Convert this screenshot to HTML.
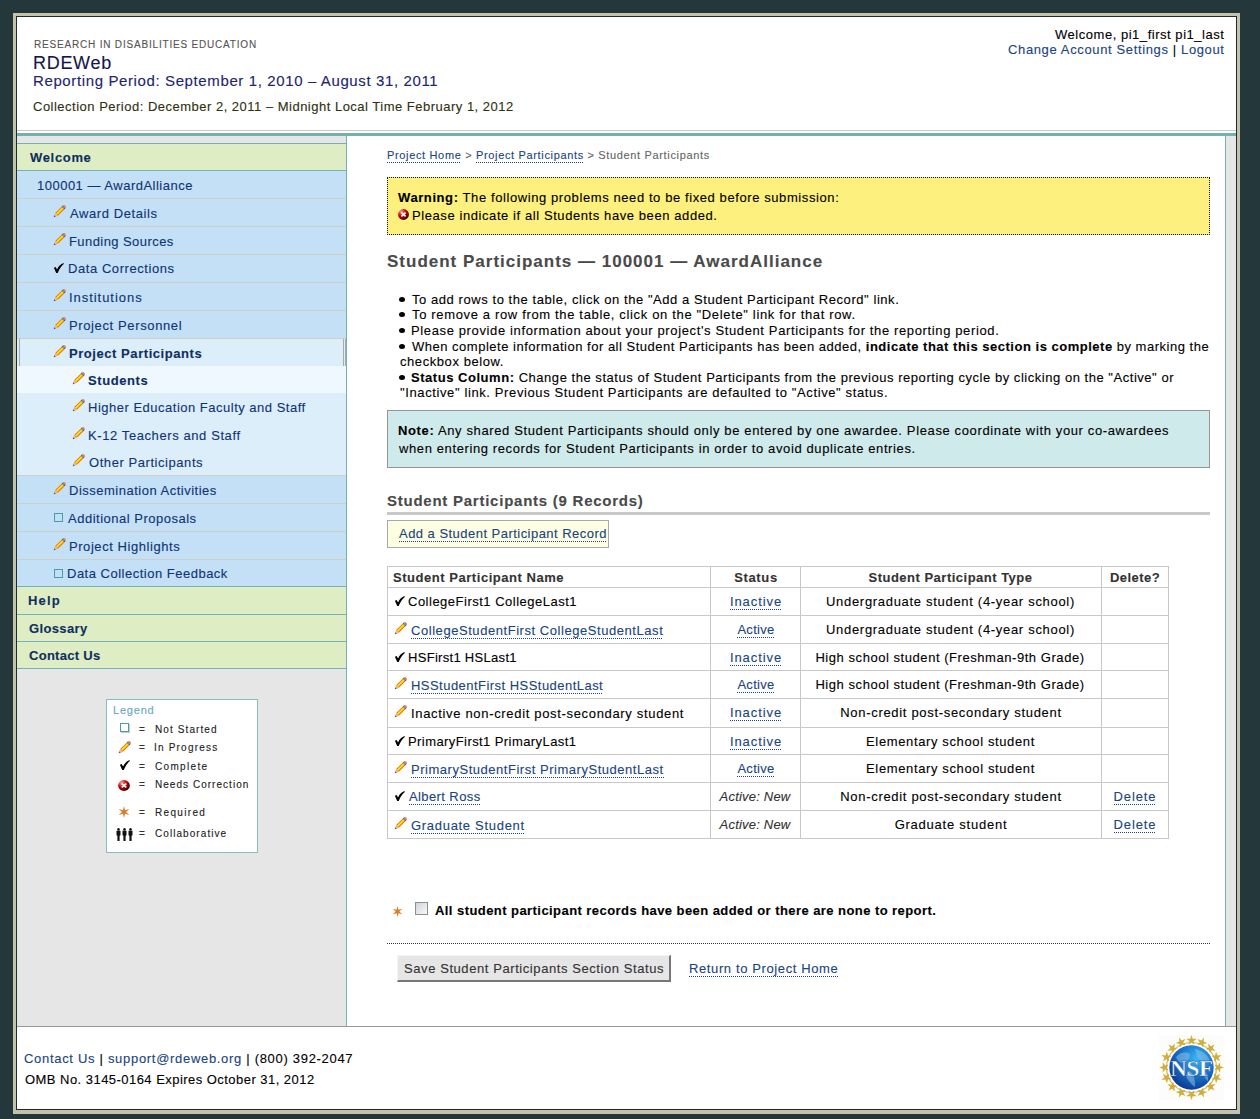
<!DOCTYPE html>
<html><head><meta charset="utf-8">
<style>
html,body{margin:0;padding:0;}
body{width:1260px;height:1119px;background:#24373b;position:relative;overflow:hidden;font-family:"Liberation Sans",sans-serif;font-size:13px;color:#000;}
.a{position:absolute;white-space:nowrap;-webkit-text-stroke:0.12px currentColor;}
svg.a{display:block;}
.u{background-image:linear-gradient(to right,currentColor 50%,transparent 50%);background-size:2px 1px;background-repeat:repeat-x;background-position:0 100%;padding-bottom:1px;}
.u11{padding-bottom:2px;}
b{font-weight:700;}
</style></head><body>
<div class="a" style="left:13px;top:13px;width:1227px;height:1101px;background:#c4c2ad;"></div>
<div class="a" style="left:16px;top:16px;width:1221px;height:1094px;background:#1e2b2e;"></div>
<div class="a" style="left:17px;top:17px;width:1219px;height:1092px;background:#ffffff;"></div>
<div id="t1" class="a" style="left:34px;top:40px;font-size:10px;line-height:10px;color:#555;letter-spacing:0.811px;">RESEARCH IN DISABILITIES EDUCATION</div>
<div id="t2" class="a" style="left:33px;top:54px;font-size:18px;line-height:18px;color:#14164a;letter-spacing:0.700px;">RDEWeb</div>
<div id="t3" class="a" style="left:33px;top:73px;font-size:15px;line-height:15px;color:#1d2470;letter-spacing:0.618px;">Reporting Period: September 1, 2010 – August 31, 2011</div>
<div id="t4" class="a" style="left:33px;top:100px;font-size:13px;line-height:13px;color:#2e3210;letter-spacing:0.494px;">Collection Period: December 2, 2011 – Midnight Local Time February 1, 2012</div>
<div id="t5" class="a" style="left:1055px;top:28px;font-size:13px;line-height:13px;color:#000;letter-spacing:0.530px;">Welcome, pi1_first pi1_last</div>
<div id="t6" class="a" style="left:1008px;top:43px;font-size:13px;line-height:13px;color:#000;letter-spacing:0.632px;"><span style="color:#1a4580">Change Account Settings</span> | <span style="color:#1a4580">Logout</span></div>
<div class="a" style="left:17px;top:130px;width:1219px;height:1px;background:#c8c8c8;"></div>
<div class="a" style="left:17px;top:133px;width:1219px;height:3px;background:#74b1b2;"></div>
<div class="a" style="left:17px;top:136px;width:329px;height:890px;background:#e6e6e6;"></div>
<div class="a" style="left:346px;top:136px;width:1px;height:890px;background:#74b1b2;"></div>
<div class="a" style="left:17px;top:143px;width:329px;height:1px;background:#74b1b2;"></div>
<div class="a" style="left:17px;top:144px;width:329px;height:26px;background:#dfedc4;"></div>
<div class="a" style="left:17px;top:170px;width:329px;height:1px;background:#74b1b2;"></div>
<div id="t7" class="a" style="left:30px;top:151px;font-size:13px;line-height:13px;color:#0f2f5f;font-weight:700;letter-spacing:0.667px;">Welcome</div>
<div class="a" style="left:17px;top:171px;width:329px;height:415px;background:#c3e0f6;"></div>
<div class="a" style="left:17px;top:586px;width:329px;height:1px;background:#74b1b2;"></div>
<div id="t8" class="a" style="left:37px;top:179px;font-size:13px;line-height:13px;color:#0f3474;letter-spacing:0.495px;">100001 — AwardAlliance</div>
<div class="a" style="left:17px;top:198px;width:329px;height:1px;background:#cfcfc8;"></div>
<div class="a" style="left:17px;top:226px;width:329px;height:1px;background:#cfcfc8;"></div>
<div class="a" style="left:17px;top:254px;width:329px;height:1px;background:#cfcfc8;"></div>
<div class="a" style="left:17px;top:282px;width:329px;height:1px;background:#cfcfc8;"></div>
<div class="a" style="left:17px;top:310px;width:329px;height:1px;background:#cfcfc8;"></div>
<div class="a" style="left:17px;top:338px;width:329px;height:1px;background:#cfcfc8;"></div>
<svg class="a" style="left:53px;top:205px" width="13" height="13" viewBox="0 0 13 13"><g transform="translate(6.5 6.5) rotate(-45) scale(0.88) translate(-9.3 -2.1)"><polygon points="0,2.1 2.3,0.8 2.3,3.4" fill="#5e5656"/><polygon points="2.3,0.8 4.6,0 4.6,4.2 2.3,3.4" fill="#e6b49c"/><rect x="4.6" y="0" width="10.6" height="4.2" fill="#e07800"/><rect x="4.6" y="0.9" width="10.6" height="2.3" fill="#ffc200"/><rect x="5.2" y="1.3" width="9.4" height="1.0" fill="#ffe84a"/><rect x="15.2" y="0" width="1.5" height="4.2" fill="#276488"/><rect x="15.5" y="1" width="0.7" height="2" fill="#70b4dc"/><path d="M16.7 0 H17.4 Q18.6 0 18.6 2.1 Q18.6 4.2 17.4 4.2 H16.7 Z" fill="#f0805a"/></g></svg>
<div id="t9" class="a" style="left:70px;top:207px;font-size:13px;line-height:13px;color:#0f3474;letter-spacing:0.583px;">Award Details</div>
<svg class="a" style="left:53px;top:233px" width="13" height="13" viewBox="0 0 13 13"><g transform="translate(6.5 6.5) rotate(-45) scale(0.88) translate(-9.3 -2.1)"><polygon points="0,2.1 2.3,0.8 2.3,3.4" fill="#5e5656"/><polygon points="2.3,0.8 4.6,0 4.6,4.2 2.3,3.4" fill="#e6b49c"/><rect x="4.6" y="0" width="10.6" height="4.2" fill="#e07800"/><rect x="4.6" y="0.9" width="10.6" height="2.3" fill="#ffc200"/><rect x="5.2" y="1.3" width="9.4" height="1.0" fill="#ffe84a"/><rect x="15.2" y="0" width="1.5" height="4.2" fill="#276488"/><rect x="15.5" y="1" width="0.7" height="2" fill="#70b4dc"/><path d="M16.7 0 H17.4 Q18.6 0 18.6 2.1 Q18.6 4.2 17.4 4.2 H16.7 Z" fill="#f0805a"/></g></svg>
<div id="t10" class="a" style="left:69px;top:235px;font-size:13px;line-height:13px;color:#0f3474;letter-spacing:0.429px;">Funding Sources</div>
<svg class="a" style="left:53px;top:263px" width="11" height="10" viewBox="0 0 11 10"><path d="M0.9 4.7 L2.7 3.9 L4.0 6.4 Q6.4 1.6 10.6 0.1 L10.8 1.1 Q7.5 3.5 4.7 9.9 L3.2 10 Z" fill="#000"/></svg>
<div id="t11" class="a" style="left:68px;top:262px;font-size:13px;line-height:13px;color:#0f3474;letter-spacing:0.567px;">Data Corrections</div>
<svg class="a" style="left:53px;top:289px" width="13" height="13" viewBox="0 0 13 13"><g transform="translate(6.5 6.5) rotate(-45) scale(0.88) translate(-9.3 -2.1)"><polygon points="0,2.1 2.3,0.8 2.3,3.4" fill="#5e5656"/><polygon points="2.3,0.8 4.6,0 4.6,4.2 2.3,3.4" fill="#e6b49c"/><rect x="4.6" y="0" width="10.6" height="4.2" fill="#e07800"/><rect x="4.6" y="0.9" width="10.6" height="2.3" fill="#ffc200"/><rect x="5.2" y="1.3" width="9.4" height="1.0" fill="#ffe84a"/><rect x="15.2" y="0" width="1.5" height="4.2" fill="#276488"/><rect x="15.5" y="1" width="0.7" height="2" fill="#70b4dc"/><path d="M16.7 0 H17.4 Q18.6 0 18.6 2.1 Q18.6 4.2 17.4 4.2 H16.7 Z" fill="#f0805a"/></g></svg>
<div id="t12" class="a" style="left:69px;top:291px;font-size:13px;line-height:13px;color:#0f3474;letter-spacing:0.955px;">Institutions</div>
<svg class="a" style="left:53px;top:317px" width="13" height="13" viewBox="0 0 13 13"><g transform="translate(6.5 6.5) rotate(-45) scale(0.88) translate(-9.3 -2.1)"><polygon points="0,2.1 2.3,0.8 2.3,3.4" fill="#5e5656"/><polygon points="2.3,0.8 4.6,0 4.6,4.2 2.3,3.4" fill="#e6b49c"/><rect x="4.6" y="0" width="10.6" height="4.2" fill="#e07800"/><rect x="4.6" y="0.9" width="10.6" height="2.3" fill="#ffc200"/><rect x="5.2" y="1.3" width="9.4" height="1.0" fill="#ffe84a"/><rect x="15.2" y="0" width="1.5" height="4.2" fill="#276488"/><rect x="15.5" y="1" width="0.7" height="2" fill="#70b4dc"/><path d="M16.7 0 H17.4 Q18.6 0 18.6 2.1 Q18.6 4.2 17.4 4.2 H16.7 Z" fill="#f0805a"/></g></svg>
<div id="t13" class="a" style="left:69px;top:319px;font-size:13px;line-height:13px;color:#0f3474;letter-spacing:0.625px;">Project Personnel</div>
<div class="a" style="left:17px;top:339px;width:329px;height:136px;background:#ddeefb;"></div>
<div class="a" style="left:19px;top:339px;width:1px;height:27px;background:#aaaaaa;"></div>
<div class="a" style="left:343px;top:339px;width:1px;height:27px;background:#aaaaaa;"></div>
<div class="a" style="left:345px;top:339px;width:1px;height:27px;background:#aaaaaa;"></div>
<svg class="a" style="left:53px;top:345px" width="13" height="13" viewBox="0 0 13 13"><g transform="translate(6.5 6.5) rotate(-45) scale(0.88) translate(-9.3 -2.1)"><polygon points="0,2.1 2.3,0.8 2.3,3.4" fill="#5e5656"/><polygon points="2.3,0.8 4.6,0 4.6,4.2 2.3,3.4" fill="#e6b49c"/><rect x="4.6" y="0" width="10.6" height="4.2" fill="#e07800"/><rect x="4.6" y="0.9" width="10.6" height="2.3" fill="#ffc200"/><rect x="5.2" y="1.3" width="9.4" height="1.0" fill="#ffe84a"/><rect x="15.2" y="0" width="1.5" height="4.2" fill="#276488"/><rect x="15.5" y="1" width="0.7" height="2" fill="#70b4dc"/><path d="M16.7 0 H17.4 Q18.6 0 18.6 2.1 Q18.6 4.2 17.4 4.2 H16.7 Z" fill="#f0805a"/></g></svg>
<div id="t14" class="a" style="left:69px;top:347px;font-size:13px;line-height:13px;color:#0f2f5f;font-weight:700;letter-spacing:0.555px;">Project Participants</div>
<div class="a" style="left:17px;top:366px;width:329px;height:27px;background:#eef8fe;"></div>
<svg class="a" style="left:72px;top:372px" width="13" height="13" viewBox="0 0 13 13"><g transform="translate(6.5 6.5) rotate(-45) scale(0.88) translate(-9.3 -2.1)"><polygon points="0,2.1 2.3,0.8 2.3,3.4" fill="#5e5656"/><polygon points="2.3,0.8 4.6,0 4.6,4.2 2.3,3.4" fill="#e6b49c"/><rect x="4.6" y="0" width="10.6" height="4.2" fill="#e07800"/><rect x="4.6" y="0.9" width="10.6" height="2.3" fill="#ffc200"/><rect x="5.2" y="1.3" width="9.4" height="1.0" fill="#ffe84a"/><rect x="15.2" y="0" width="1.5" height="4.2" fill="#276488"/><rect x="15.5" y="1" width="0.7" height="2" fill="#70b4dc"/><path d="M16.7 0 H17.4 Q18.6 0 18.6 2.1 Q18.6 4.2 17.4 4.2 H16.7 Z" fill="#f0805a"/></g></svg>
<div id="t15" class="a" style="left:88px;top:374px;font-size:13px;line-height:13px;color:#0f2f5f;font-weight:700;letter-spacing:0.593px;">Students</div>
<svg class="a" style="left:72px;top:399px" width="13" height="13" viewBox="0 0 13 13"><g transform="translate(6.5 6.5) rotate(-45) scale(0.88) translate(-9.3 -2.1)"><polygon points="0,2.1 2.3,0.8 2.3,3.4" fill="#5e5656"/><polygon points="2.3,0.8 4.6,0 4.6,4.2 2.3,3.4" fill="#e6b49c"/><rect x="4.6" y="0" width="10.6" height="4.2" fill="#e07800"/><rect x="4.6" y="0.9" width="10.6" height="2.3" fill="#ffc200"/><rect x="5.2" y="1.3" width="9.4" height="1.0" fill="#ffe84a"/><rect x="15.2" y="0" width="1.5" height="4.2" fill="#276488"/><rect x="15.5" y="1" width="0.7" height="2" fill="#70b4dc"/><path d="M16.7 0 H17.4 Q18.6 0 18.6 2.1 Q18.6 4.2 17.4 4.2 H16.7 Z" fill="#f0805a"/></g></svg>
<div id="t16" class="a" style="left:88px;top:401px;font-size:13px;line-height:13px;color:#0f3474;letter-spacing:0.500px;">Higher Education Faculty and Staff</div>
<svg class="a" style="left:72px;top:427px" width="13" height="13" viewBox="0 0 13 13"><g transform="translate(6.5 6.5) rotate(-45) scale(0.88) translate(-9.3 -2.1)"><polygon points="0,2.1 2.3,0.8 2.3,3.4" fill="#5e5656"/><polygon points="2.3,0.8 4.6,0 4.6,4.2 2.3,3.4" fill="#e6b49c"/><rect x="4.6" y="0" width="10.6" height="4.2" fill="#e07800"/><rect x="4.6" y="0.9" width="10.6" height="2.3" fill="#ffc200"/><rect x="5.2" y="1.3" width="9.4" height="1.0" fill="#ffe84a"/><rect x="15.2" y="0" width="1.5" height="4.2" fill="#276488"/><rect x="15.5" y="1" width="0.7" height="2" fill="#70b4dc"/><path d="M16.7 0 H17.4 Q18.6 0 18.6 2.1 Q18.6 4.2 17.4 4.2 H16.7 Z" fill="#f0805a"/></g></svg>
<div id="t17" class="a" style="left:88px;top:429px;font-size:13px;line-height:13px;color:#0f3474;letter-spacing:0.591px;">K-12 Teachers and Staff</div>
<svg class="a" style="left:72px;top:454px" width="13" height="13" viewBox="0 0 13 13"><g transform="translate(6.5 6.5) rotate(-45) scale(0.88) translate(-9.3 -2.1)"><polygon points="0,2.1 2.3,0.8 2.3,3.4" fill="#5e5656"/><polygon points="2.3,0.8 4.6,0 4.6,4.2 2.3,3.4" fill="#e6b49c"/><rect x="4.6" y="0" width="10.6" height="4.2" fill="#e07800"/><rect x="4.6" y="0.9" width="10.6" height="2.3" fill="#ffc200"/><rect x="5.2" y="1.3" width="9.4" height="1.0" fill="#ffe84a"/><rect x="15.2" y="0" width="1.5" height="4.2" fill="#276488"/><rect x="15.5" y="1" width="0.7" height="2" fill="#70b4dc"/><path d="M16.7 0 H17.4 Q18.6 0 18.6 2.1 Q18.6 4.2 17.4 4.2 H16.7 Z" fill="#f0805a"/></g></svg>
<div id="t18" class="a" style="left:89px;top:456px;font-size:13px;line-height:13px;color:#0f3474;letter-spacing:0.559px;">Other Participants</div>
<div class="a" style="left:17px;top:475px;width:329px;height:1px;background:#cfcfc8;"></div>
<div class="a" style="left:17px;top:503px;width:329px;height:1px;background:#cfcfc8;"></div>
<div class="a" style="left:17px;top:531px;width:329px;height:1px;background:#cfcfc8;"></div>
<div class="a" style="left:17px;top:559px;width:329px;height:1px;background:#cfcfc8;"></div>
<svg class="a" style="left:53px;top:482px" width="13" height="13" viewBox="0 0 13 13"><g transform="translate(6.5 6.5) rotate(-45) scale(0.88) translate(-9.3 -2.1)"><polygon points="0,2.1 2.3,0.8 2.3,3.4" fill="#5e5656"/><polygon points="2.3,0.8 4.6,0 4.6,4.2 2.3,3.4" fill="#e6b49c"/><rect x="4.6" y="0" width="10.6" height="4.2" fill="#e07800"/><rect x="4.6" y="0.9" width="10.6" height="2.3" fill="#ffc200"/><rect x="5.2" y="1.3" width="9.4" height="1.0" fill="#ffe84a"/><rect x="15.2" y="0" width="1.5" height="4.2" fill="#276488"/><rect x="15.5" y="1" width="0.7" height="2" fill="#70b4dc"/><path d="M16.7 0 H17.4 Q18.6 0 18.6 2.1 Q18.6 4.2 17.4 4.2 H16.7 Z" fill="#f0805a"/></g></svg>
<div id="t19" class="a" style="left:69px;top:484px;font-size:13px;line-height:13px;color:#0f3474;letter-spacing:0.500px;">Dissemination Activities</div>
<div class="a" style="left:54px;top:513px;width:7px;height:7px;background:transparent;border:1px solid #4a9aa8;"></div>
<div id="t20" class="a" style="left:68px;top:512px;font-size:13px;line-height:13px;color:#0f3474;letter-spacing:0.500px;">Additional Proposals</div>
<svg class="a" style="left:53px;top:538px" width="13" height="13" viewBox="0 0 13 13"><g transform="translate(6.5 6.5) rotate(-45) scale(0.88) translate(-9.3 -2.1)"><polygon points="0,2.1 2.3,0.8 2.3,3.4" fill="#5e5656"/><polygon points="2.3,0.8 4.6,0 4.6,4.2 2.3,3.4" fill="#e6b49c"/><rect x="4.6" y="0" width="10.6" height="4.2" fill="#e07800"/><rect x="4.6" y="0.9" width="10.6" height="2.3" fill="#ffc200"/><rect x="5.2" y="1.3" width="9.4" height="1.0" fill="#ffe84a"/><rect x="15.2" y="0" width="1.5" height="4.2" fill="#276488"/><rect x="15.5" y="1" width="0.7" height="2" fill="#70b4dc"/><path d="M16.7 0 H17.4 Q18.6 0 18.6 2.1 Q18.6 4.2 17.4 4.2 H16.7 Z" fill="#f0805a"/></g></svg>
<div id="t21" class="a" style="left:69px;top:540px;font-size:13px;line-height:13px;color:#0f3474;letter-spacing:0.559px;">Project Highlights</div>
<div class="a" style="left:54px;top:569px;width:7px;height:7px;background:transparent;border:1px solid #4a9aa8;"></div>
<div id="t22" class="a" style="left:67px;top:567px;font-size:13px;line-height:13px;color:#0f3474;letter-spacing:0.500px;">Data Collection Feedback</div>
<div class="a" style="left:17px;top:587px;width:329px;height:27px;background:#dfedc4;"></div>
<div class="a" style="left:17px;top:614px;width:329px;height:1px;background:#74b1b2;"></div>
<div id="t23" class="a" style="left:28px;top:594px;font-size:13px;line-height:13px;color:#0f2f5f;font-weight:700;letter-spacing:1.167px;">Help</div>
<div class="a" style="left:17px;top:615px;width:329px;height:26px;background:#dfedc4;"></div>
<div class="a" style="left:17px;top:641px;width:329px;height:1px;background:#74b1b2;"></div>
<div id="t24" class="a" style="left:29px;top:622px;font-size:13px;line-height:13px;color:#0f2f5f;font-weight:700;letter-spacing:0.357px;">Glossary</div>
<div class="a" style="left:17px;top:642px;width:329px;height:26px;background:#dfedc4;"></div>
<div class="a" style="left:17px;top:668px;width:329px;height:1px;background:#74b1b2;"></div>
<div id="t25" class="a" style="left:29px;top:649px;font-size:13px;line-height:13px;color:#0f2f5f;font-weight:700;letter-spacing:0.278px;">Contact Us</div>
<div class="a" style="left:106px;top:699px;width:150px;height:152px;background:#ffffff;border:1px solid #86bcc4;"></div>
<div id="t26" class="a" style="left:113px;top:705px;font-size:11px;line-height:11px;color:#6aa6c0;letter-spacing:0.800px;">Legend</div>
<div class="a" style="left:120px;top:723px;width:7px;height:7px;background:transparent;border:1px solid #4a9aa8;box-shadow:1px 1px 1px #ccc;"></div>
<div id="t27" class="a" style="left:139px;top:725px;font-size:10px;line-height:10px;color:#333;">=</div>
<div id="t28" class="a" style="left:155px;top:725px;font-size:10px;line-height:10px;color:#222;letter-spacing:1.100px;">Not Started</div>
<div id="t29" class="a" style="left:139px;top:743px;font-size:10px;line-height:10px;color:#333;">=</div>
<div id="t30" class="a" style="left:154px;top:743px;font-size:10px;line-height:10px;color:#222;letter-spacing:1.200px;">In Progress</div>
<div id="t31" class="a" style="left:139px;top:762px;font-size:10px;line-height:10px;color:#333;">=</div>
<div id="t32" class="a" style="left:155px;top:762px;font-size:10px;line-height:10px;color:#222;letter-spacing:1.329px;">Complete</div>
<div id="t33" class="a" style="left:139px;top:780px;font-size:10px;line-height:10px;color:#333;">=</div>
<div id="t34" class="a" style="left:155px;top:780px;font-size:10px;line-height:10px;color:#222;letter-spacing:1.033px;">Needs Correction</div>
<div id="t35" class="a" style="left:139px;top:808px;font-size:10px;line-height:10px;color:#333;">=</div>
<div id="t36" class="a" style="left:155px;top:808px;font-size:10px;line-height:10px;color:#222;letter-spacing:1.329px;">Required</div>
<div id="t37" class="a" style="left:139px;top:829px;font-size:10px;line-height:10px;color:#333;">=</div>
<div id="t38" class="a" style="left:155px;top:829px;font-size:10px;line-height:10px;color:#222;letter-spacing:1.066px;">Collaborative</div>
<svg class="a" style="left:118px;top:741px" width="13" height="13" viewBox="0 0 13 13"><g transform="translate(6.5 6.5) rotate(-45) scale(0.88) translate(-9.3 -2.1)"><polygon points="0,2.1 2.3,0.8 2.3,3.4" fill="#5e5656"/><polygon points="2.3,0.8 4.6,0 4.6,4.2 2.3,3.4" fill="#e6b49c"/><rect x="4.6" y="0" width="10.6" height="4.2" fill="#e07800"/><rect x="4.6" y="0.9" width="10.6" height="2.3" fill="#ffc200"/><rect x="5.2" y="1.3" width="9.4" height="1.0" fill="#ffe84a"/><rect x="15.2" y="0" width="1.5" height="4.2" fill="#276488"/><rect x="15.5" y="1" width="0.7" height="2" fill="#70b4dc"/><path d="M16.7 0 H17.4 Q18.6 0 18.6 2.1 Q18.6 4.2 17.4 4.2 H16.7 Z" fill="#f0805a"/></g></svg>
<svg class="a" style="left:119px;top:760px" width="11" height="10" viewBox="0 0 11 10"><path d="M0.9 4.7 L2.7 3.9 L4.0 6.4 Q6.4 1.6 10.6 0.1 L10.8 1.1 Q7.5 3.5 4.7 9.9 L3.2 10 Z" fill="#000"/></svg>
<svg class="a" style="left:118px;top:780px" width="12" height="11" viewBox="0 0 11 11" preserveAspectRatio="none"><defs><radialGradient id="rg" cx="0.3" cy="0.25" r="0.8"><stop offset="0" stop-color="#f4a6a6"/><stop offset="0.45" stop-color="#d10a0a"/><stop offset="1" stop-color="#3c0000"/></radialGradient></defs><circle cx="5.5" cy="5.5" r="5.4" fill="url(#rg)"/><path d="M3.4 3.6 L7.6 7.4 M7.6 3.6 L3.4 7.4" stroke="#fff" stroke-width="1.5"/></svg>
<svg class="a" style="left:118px;top:806px" width="12" height="12" viewBox="0 0 11 11"><polygon points="5.50,0.00 6.45,3.85 10.26,2.75 7.40,5.50 10.26,8.25 6.45,7.15 5.50,11.00 4.55,7.15 0.74,8.25 3.60,5.50 0.74,2.75 4.55,3.85" fill="#e07a24"/></svg>
<svg class="a" style="left:116px;top:828px" width="17" height="13" viewBox="0 0 17 13"><g fill="#111"><circle cx="2.5" cy="1.2" r="1.2"/><rect x="0.5" y="2.6" width="4" height="5.2" rx="1"/><rect x="1.4" y="7" width="2.2" height="6" rx="0.6"/><circle cx="8.5" cy="1.2" r="1.2"/><rect x="6.5" y="2.6" width="4" height="5.2" rx="1"/><rect x="7.4" y="7" width="2.2" height="6" rx="0.6"/><circle cx="14.5" cy="1.2" r="1.2"/><rect x="12.5" y="2.6" width="4" height="5.2" rx="1"/><rect x="13.4" y="7" width="2.2" height="6" rx="0.6"/></g></svg>
<div class="a" style="left:1225px;top:136px;width:1px;height:890px;background:#74b1b2;"></div>
<div class="a" style="left:1226px;top:136px;width:10px;height:890px;background:#e6e6e6;"></div>
<div id="t39" class="a" style="left:387px;top:150px;font-size:11px;line-height:11px;color:#666;letter-spacing:0.653px;"><span class="u u11" style="color:#1a4580">Project Home</span> &gt; <span class="u u11" style="color:#1a4580">Project Participants</span> &gt; Student Participants</div>
<div class="a" style="left:387px;top:177px;width:821px;height:56px;background:#fef07e;border:1px dotted #111;"></div>
<div id="t40" class="a" style="left:398px;top:191px;font-size:13px;line-height:13px;color:#000;letter-spacing:0.591px;"><b>Warning:</b> The following problems need to be fixed before submission:</div>
<svg class="a" style="left:398px;top:209px" width="11" height="11" viewBox="0 0 11 11" preserveAspectRatio="none"><defs><radialGradient id="rg" cx="0.3" cy="0.25" r="0.8"><stop offset="0" stop-color="#f4a6a6"/><stop offset="0.45" stop-color="#d10a0a"/><stop offset="1" stop-color="#3c0000"/></radialGradient></defs><circle cx="5.5" cy="5.5" r="5.4" fill="url(#rg)"/><path d="M3.4 3.6 L7.6 7.4 M7.6 3.6 L3.4 7.4" stroke="#fff" stroke-width="1.5"/></svg>
<div id="t41" class="a" style="left:412px;top:209px;font-size:13px;line-height:13px;color:#000;letter-spacing:0.583px;">Please indicate if all Students have been added.</div>
<div id="t42" class="a" style="left:387px;top:253px;font-size:17px;line-height:17px;color:#4a4a4a;font-weight:700;letter-spacing:1.000px;">Student Participants — 100001 — AwardAlliance</div>
<div class="a" style="left:399px;top:297px;width:6px;height:5px;background:#000;border-radius:50%;"></div>
<div id="t43" class="a" style="left:412px;top:293px;font-size:13px;line-height:13px;color:#000;letter-spacing:0.564px;">To add rows to the table, click on the "Add a Student Participant Record" link.</div>
<div class="a" style="left:399px;top:312px;width:6px;height:5px;background:#000;border-radius:50%;"></div>
<div id="t44" class="a" style="left:412px;top:308px;font-size:13px;line-height:13px;color:#000;letter-spacing:0.655px;">To remove a row from the table, click on the "Delete" link for that row.</div>
<div class="a" style="left:399px;top:328px;width:6px;height:5px;background:#000;border-radius:50%;"></div>
<div id="t45" class="a" style="left:411px;top:324px;font-size:13px;line-height:13px;color:#000;letter-spacing:0.629px;">Please provide information about your project's Student Participants for the reporting period.</div>
<div class="a" style="left:399px;top:344px;width:6px;height:5px;background:#000;border-radius:50%;"></div>
<div id="t46" class="a" style="left:412px;top:340px;font-size:13px;line-height:13px;color:#000;letter-spacing:0.508px;">When complete information for all Student Participants has been added, <b>indicate that this section is complete</b> by marking the</div>
<div id="t47" class="a" style="left:400px;top:355px;font-size:13px;line-height:13px;color:#000;letter-spacing:0.571px;">checkbox below.</div>
<div class="a" style="left:399px;top:375px;width:6px;height:5px;background:#000;border-radius:50%;"></div>
<div id="t48" class="a" style="left:411px;top:371px;font-size:13px;line-height:13px;color:#000;letter-spacing:0.533px;"><b>Status Column:</b> Change the status of Student Participants from the previous reporting cycle by clicking on the "Active" or</div>
<div id="t49" class="a" style="left:400px;top:386px;font-size:13px;line-height:13px;color:#000;letter-spacing:0.614px;">"Inactive" link. Previous Student Participants are defaulted to "Active" status.</div>
<div class="a" style="left:387px;top:410px;width:821px;height:56px;background:#cfeaea;border:1px solid #959595;"></div>
<div id="t50" class="a" style="left:398px;top:424px;font-size:13px;line-height:13px;color:#000;letter-spacing:0.630px;"><b>Note:</b> Any shared Student Participants should only be entered by one awardee. Please coordinate with your co-awardees</div>
<div id="t51" class="a" style="left:399px;top:442px;font-size:13px;line-height:13px;color:#000;letter-spacing:0.610px;">when entering records for Student Participants in order to avoid duplicate entries.</div>
<div id="t52" class="a" style="left:387px;top:493px;font-size:15px;line-height:15px;color:#4a4a4a;font-weight:700;letter-spacing:0.752px;">Student Participants (9 Records)</div>
<div class="a" style="left:387px;top:512px;width:823px;height:3px;background:#c8c8c8;"></div>
<div class="a" style="left:387px;top:520px;width:220px;height:26px;background:#fefee2;border:1px solid #a8a8a8;"></div>
<div id="t53" class="a" style="left:399px;top:527px;font-size:13px;line-height:13px;color:#1a4580;letter-spacing:0.468px;"><span class="u">Add a Student Participant Record</span></div>
<div class="a" style="left:387px;top:566px;width:1px;height:273px;background:#c8c8c8;"></div>
<div class="a" style="left:710px;top:566px;width:1px;height:273px;background:#c8c8c8;"></div>
<div class="a" style="left:800px;top:566px;width:1px;height:273px;background:#c8c8c8;"></div>
<div class="a" style="left:1101px;top:566px;width:1px;height:273px;background:#c8c8c8;"></div>
<div class="a" style="left:1168px;top:566px;width:1px;height:273px;background:#c8c8c8;"></div>
<div class="a" style="left:387px;top:566px;width:782px;height:1px;background:#c8c8c8;"></div>
<div class="a" style="left:387px;top:587px;width:782px;height:1px;background:#c8c8c8;"></div>
<div class="a" style="left:387px;top:615px;width:782px;height:1px;background:#c8c8c8;"></div>
<div class="a" style="left:387px;top:643px;width:782px;height:1px;background:#c8c8c8;"></div>
<div class="a" style="left:387px;top:670px;width:782px;height:1px;background:#c8c8c8;"></div>
<div class="a" style="left:387px;top:698px;width:782px;height:1px;background:#c8c8c8;"></div>
<div class="a" style="left:387px;top:727px;width:782px;height:1px;background:#c8c8c8;"></div>
<div class="a" style="left:387px;top:754px;width:782px;height:1px;background:#c8c8c8;"></div>
<div class="a" style="left:387px;top:782px;width:782px;height:1px;background:#c8c8c8;"></div>
<div class="a" style="left:387px;top:810px;width:782px;height:1px;background:#c8c8c8;"></div>
<div class="a" style="left:387px;top:838px;width:782px;height:1px;background:#c8c8c8;"></div>
<div id="t54" class="a" style="left:393px;top:571px;font-size:13px;line-height:13px;color:#333;font-weight:700;letter-spacing:0.537px;">Student Participant Name</div>
<div id="t55" class="a" style="left:711.5px;top:571px;font-size:13px;line-height:13px;color:#333;font-weight:700;letter-spacing:0.650px;width:89px;text-align:center;">Status</div>
<div id="t56" class="a" style="left:800.5px;top:571px;font-size:13px;line-height:13px;color:#333;font-weight:700;letter-spacing:0.493px;width:300px;text-align:center;">Student Participant Type</div>
<div id="t57" class="a" style="left:1102.0px;top:571px;font-size:13px;line-height:13px;color:#333;font-weight:700;letter-spacing:0.450px;width:66px;text-align:center;">Delete?</div>
<svg class="a" style="left:394px;top:596px" width="11" height="10" viewBox="0 0 11 10"><path d="M0.9 4.7 L2.7 3.9 L4.0 6.4 Q6.4 1.6 10.6 0.1 L10.8 1.1 Q7.5 3.5 4.7 9.9 L3.2 10 Z" fill="#000"/></svg>
<div id="t58" class="a" style="left:408px;top:595px;font-size:13px;line-height:13px;color:#000;letter-spacing:0.500px;">CollegeFirst1 CollegeLast1</div>
<div id="t59" class="a" style="left:711.5px;top:595px;font-size:13px;line-height:13px;color:#1a4580;letter-spacing:0.929px;width:89px;text-align:center;"><span class="u">Inactive</span></div>
<div id="t60" class="a" style="left:800.5px;top:595px;font-size:13px;line-height:13px;color:#000;letter-spacing:0.694px;width:300px;text-align:center;">Undergraduate student (4-year school)</div>
<svg class="a" style="left:394px;top:622px" width="13" height="13" viewBox="0 0 13 13"><g transform="translate(6.5 6.5) rotate(-45) scale(0.88) translate(-9.3 -2.1)"><polygon points="0,2.1 2.3,0.8 2.3,3.4" fill="#5e5656"/><polygon points="2.3,0.8 4.6,0 4.6,4.2 2.3,3.4" fill="#e6b49c"/><rect x="4.6" y="0" width="10.6" height="4.2" fill="#e07800"/><rect x="4.6" y="0.9" width="10.6" height="2.3" fill="#ffc200"/><rect x="5.2" y="1.3" width="9.4" height="1.0" fill="#ffe84a"/><rect x="15.2" y="0" width="1.5" height="4.2" fill="#276488"/><rect x="15.5" y="1" width="0.7" height="2" fill="#70b4dc"/><path d="M16.7 0 H17.4 Q18.6 0 18.6 2.1 Q18.6 4.2 17.4 4.2 H16.7 Z" fill="#f0805a"/></g></svg>
<div id="t61" class="a" style="left:411px;top:624px;font-size:13px;line-height:13px;color:#1a4580;letter-spacing:0.554px;"><span class="u">CollegeStudentFirst CollegeStudentLast</span></div>
<div id="t62" class="a" style="left:711.5px;top:623px;font-size:13px;line-height:13px;color:#1a4580;letter-spacing:0.300px;width:89px;text-align:center;"><span class="u">Active</span></div>
<div id="t63" class="a" style="left:800.5px;top:623px;font-size:13px;line-height:13px;color:#000;letter-spacing:0.694px;width:300px;text-align:center;">Undergraduate student (4-year school)</div>
<svg class="a" style="left:394px;top:652px" width="11" height="10" viewBox="0 0 11 10"><path d="M0.9 4.7 L2.7 3.9 L4.0 6.4 Q6.4 1.6 10.6 0.1 L10.8 1.1 Q7.5 3.5 4.7 9.9 L3.2 10 Z" fill="#000"/></svg>
<div id="t64" class="a" style="left:408px;top:651px;font-size:13px;line-height:13px;color:#000;letter-spacing:0.300px;">HSFirst1 HSLast1</div>
<div id="t65" class="a" style="left:711.5px;top:651px;font-size:13px;line-height:13px;color:#1a4580;letter-spacing:0.929px;width:89px;text-align:center;"><span class="u">Inactive</span></div>
<div id="t66" class="a" style="left:800.0px;top:651px;font-size:13px;line-height:13px;color:#000;letter-spacing:0.551px;width:300px;text-align:center;">High school student (Freshman-9th Grade)</div>
<svg class="a" style="left:394px;top:677px" width="13" height="13" viewBox="0 0 13 13"><g transform="translate(6.5 6.5) rotate(-45) scale(0.88) translate(-9.3 -2.1)"><polygon points="0,2.1 2.3,0.8 2.3,3.4" fill="#5e5656"/><polygon points="2.3,0.8 4.6,0 4.6,4.2 2.3,3.4" fill="#e6b49c"/><rect x="4.6" y="0" width="10.6" height="4.2" fill="#e07800"/><rect x="4.6" y="0.9" width="10.6" height="2.3" fill="#ffc200"/><rect x="5.2" y="1.3" width="9.4" height="1.0" fill="#ffe84a"/><rect x="15.2" y="0" width="1.5" height="4.2" fill="#276488"/><rect x="15.5" y="1" width="0.7" height="2" fill="#70b4dc"/><path d="M16.7 0 H17.4 Q18.6 0 18.6 2.1 Q18.6 4.2 17.4 4.2 H16.7 Z" fill="#f0805a"/></g></svg>
<div id="t67" class="a" style="left:411px;top:679px;font-size:13px;line-height:13px;color:#1a4580;letter-spacing:0.463px;"><span class="u">HSStudentFirst HSStudentLast</span></div>
<div id="t68" class="a" style="left:711.5px;top:678px;font-size:13px;line-height:13px;color:#1a4580;letter-spacing:0.300px;width:89px;text-align:center;"><span class="u">Active</span></div>
<div id="t69" class="a" style="left:800.0px;top:678px;font-size:13px;line-height:13px;color:#000;letter-spacing:0.551px;width:300px;text-align:center;">High school student (Freshman-9th Grade)</div>
<svg class="a" style="left:394px;top:705px" width="13" height="13" viewBox="0 0 13 13"><g transform="translate(6.5 6.5) rotate(-45) scale(0.88) translate(-9.3 -2.1)"><polygon points="0,2.1 2.3,0.8 2.3,3.4" fill="#5e5656"/><polygon points="2.3,0.8 4.6,0 4.6,4.2 2.3,3.4" fill="#e6b49c"/><rect x="4.6" y="0" width="10.6" height="4.2" fill="#e07800"/><rect x="4.6" y="0.9" width="10.6" height="2.3" fill="#ffc200"/><rect x="5.2" y="1.3" width="9.4" height="1.0" fill="#ffe84a"/><rect x="15.2" y="0" width="1.5" height="4.2" fill="#276488"/><rect x="15.5" y="1" width="0.7" height="2" fill="#70b4dc"/><path d="M16.7 0 H17.4 Q18.6 0 18.6 2.1 Q18.6 4.2 17.4 4.2 H16.7 Z" fill="#f0805a"/></g></svg>
<div id="t70" class="a" style="left:411px;top:707px;font-size:13px;line-height:13px;color:#000;letter-spacing:0.671px;">Inactive non-credit post-secondary student</div>
<div id="t71" class="a" style="left:711.5px;top:706px;font-size:13px;line-height:13px;color:#1a4580;letter-spacing:0.929px;width:89px;text-align:center;"><span class="u">Inactive</span></div>
<div id="t72" class="a" style="left:801.0px;top:706px;font-size:13px;line-height:13px;color:#000;letter-spacing:0.688px;width:300px;text-align:center;">Non-credit post-secondary student</div>
<svg class="a" style="left:394px;top:736px" width="11" height="10" viewBox="0 0 11 10"><path d="M0.9 4.7 L2.7 3.9 L4.0 6.4 Q6.4 1.6 10.6 0.1 L10.8 1.1 Q7.5 3.5 4.7 9.9 L3.2 10 Z" fill="#000"/></svg>
<div id="t73" class="a" style="left:408px;top:735px;font-size:13px;line-height:13px;color:#000;letter-spacing:0.420px;">PrimaryFirst1 PrimaryLast1</div>
<div id="t74" class="a" style="left:711.5px;top:735px;font-size:13px;line-height:13px;color:#1a4580;letter-spacing:0.929px;width:89px;text-align:center;"><span class="u">Inactive</span></div>
<div id="t75" class="a" style="left:800.5px;top:735px;font-size:13px;line-height:13px;color:#000;letter-spacing:0.625px;width:300px;text-align:center;">Elementary school student</div>
<svg class="a" style="left:394px;top:761px" width="13" height="13" viewBox="0 0 13 13"><g transform="translate(6.5 6.5) rotate(-45) scale(0.88) translate(-9.3 -2.1)"><polygon points="0,2.1 2.3,0.8 2.3,3.4" fill="#5e5656"/><polygon points="2.3,0.8 4.6,0 4.6,4.2 2.3,3.4" fill="#e6b49c"/><rect x="4.6" y="0" width="10.6" height="4.2" fill="#e07800"/><rect x="4.6" y="0.9" width="10.6" height="2.3" fill="#ffc200"/><rect x="5.2" y="1.3" width="9.4" height="1.0" fill="#ffe84a"/><rect x="15.2" y="0" width="1.5" height="4.2" fill="#276488"/><rect x="15.5" y="1" width="0.7" height="2" fill="#70b4dc"/><path d="M16.7 0 H17.4 Q18.6 0 18.6 2.1 Q18.6 4.2 17.4 4.2 H16.7 Z" fill="#f0805a"/></g></svg>
<div id="t76" class="a" style="left:411px;top:763px;font-size:13px;line-height:13px;color:#1a4580;letter-spacing:0.527px;"><span class="u">PrimaryStudentFirst PrimaryStudentLast</span></div>
<div id="t77" class="a" style="left:711.5px;top:762px;font-size:13px;line-height:13px;color:#1a4580;letter-spacing:0.300px;width:89px;text-align:center;"><span class="u">Active</span></div>
<div id="t78" class="a" style="left:800.5px;top:762px;font-size:13px;line-height:13px;color:#000;letter-spacing:0.625px;width:300px;text-align:center;">Elementary school student</div>
<svg class="a" style="left:394px;top:791px" width="11" height="10" viewBox="0 0 11 10"><path d="M0.9 4.7 L2.7 3.9 L4.0 6.4 Q6.4 1.6 10.6 0.1 L10.8 1.1 Q7.5 3.5 4.7 9.9 L3.2 10 Z" fill="#000"/></svg>
<div id="t79" class="a" style="left:409px;top:790px;font-size:13px;line-height:13px;color:#1a4580;letter-spacing:0.400px;"><span class="u">Albert Ross</span></div>
<div id="t80" class="a" style="left:710.5px;top:790px;font-size:13px;line-height:13px;color:#333;letter-spacing:0.200px;width:89px;text-align:center;font-style:italic;">Active: New</div>
<div id="t81" class="a" style="left:801.0px;top:790px;font-size:13px;line-height:13px;color:#000;letter-spacing:0.688px;width:300px;text-align:center;">Non-credit post-secondary student</div>
<div id="t82" class="a" style="left:1102.0px;top:790px;font-size:13px;line-height:13px;color:#1a4580;letter-spacing:0.900px;width:66px;text-align:center;"><span class="u">Delete</span></div>
<svg class="a" style="left:394px;top:817px" width="13" height="13" viewBox="0 0 13 13"><g transform="translate(6.5 6.5) rotate(-45) scale(0.88) translate(-9.3 -2.1)"><polygon points="0,2.1 2.3,0.8 2.3,3.4" fill="#5e5656"/><polygon points="2.3,0.8 4.6,0 4.6,4.2 2.3,3.4" fill="#e6b49c"/><rect x="4.6" y="0" width="10.6" height="4.2" fill="#e07800"/><rect x="4.6" y="0.9" width="10.6" height="2.3" fill="#ffc200"/><rect x="5.2" y="1.3" width="9.4" height="1.0" fill="#ffe84a"/><rect x="15.2" y="0" width="1.5" height="4.2" fill="#276488"/><rect x="15.5" y="1" width="0.7" height="2" fill="#70b4dc"/><path d="M16.7 0 H17.4 Q18.6 0 18.6 2.1 Q18.6 4.2 17.4 4.2 H16.7 Z" fill="#f0805a"/></g></svg>
<div id="t83" class="a" style="left:411px;top:819px;font-size:13px;line-height:13px;color:#1a4580;letter-spacing:0.700px;"><span class="u">Graduate Student</span></div>
<div id="t84" class="a" style="left:710.5px;top:818px;font-size:13px;line-height:13px;color:#333;letter-spacing:0.200px;width:89px;text-align:center;font-style:italic;">Active: New</div>
<div id="t85" class="a" style="left:801.0px;top:818px;font-size:13px;line-height:13px;color:#000;letter-spacing:0.767px;width:300px;text-align:center;">Graduate student</div>
<div id="t86" class="a" style="left:1102.0px;top:818px;font-size:13px;line-height:13px;color:#1a4580;letter-spacing:0.900px;width:66px;text-align:center;"><span class="u">Delete</span></div>
<svg class="a" style="left:392px;top:906px" width="11" height="11" viewBox="0 0 11 11"><polygon points="5.50,0.00 6.45,3.85 10.26,2.75 7.40,5.50 10.26,8.25 6.45,7.15 5.50,11.00 4.55,7.15 0.74,8.25 3.60,5.50 0.74,2.75 4.55,3.85" fill="#e07a24"/></svg>
<div class="a" style="left:415px;top:902px;width:11px;height:11px;background:linear-gradient(135deg,#d0d4dc,#f8f8fa);border:1px solid #8e8e8e;"></div>
<div id="t87" class="a" style="left:435px;top:904px;font-size:13px;line-height:13px;color:#000;font-weight:700;letter-spacing:0.437px;">All student participant records have been added or there are none to report.</div>
<div class="a" style="left:387px;top:943px;width:823px;height:0px;background:transparent;border-top:1px dotted #333;"></div>
<div class="a" style="left:397px;top:955px;width:271px;height:24px;background:#e6e6e6;border-top:1px solid #f4f4f4;border-left:1px solid #f4f4f4;border-right:2px solid #777;border-bottom:2px solid #777;"></div>
<div id="t88" class="a" style="left:404px;top:962px;font-size:13px;line-height:13px;color:#333;letter-spacing:0.577px;">Save Student Participants Section Status</div>
<div id="t89" class="a" style="left:689px;top:962px;font-size:13px;line-height:13px;color:#1a4580;letter-spacing:0.615px;"><span class="u">Return to Project Home</span></div>
<div class="a" style="left:17px;top:1026px;width:1219px;height:1px;background:#999999;"></div>
<div id="t90" class="a" style="left:24px;top:1052px;font-size:13px;line-height:13px;color:#000;letter-spacing:0.693px;"><span style="color:#1a4580">Contact Us</span> | <span style="color:#1a4580">support@rdeweb.org</span> | (800) 392-2047</div>
<div id="t91" class="a" style="left:25px;top:1073px;font-size:13px;line-height:13px;color:#000;letter-spacing:0.460px;">OMB No. 3145-0164 Expires October 31, 2012</div>
<svg class="a" style="left:1159px;top:1035px" width="65" height="65" viewBox="0 0 65 65">
<rect width="65" height="65" fill="#fcfcfa"/>
<defs><radialGradient id="globe" cx="0.62" cy="0.3" r="0.8"><stop offset="0" stop-color="#38b8f4"/><stop offset="0.45" stop-color="#1a78cc"/><stop offset="1" stop-color="#0a2e86"/></radialGradient></defs>
<circle cx="32.5" cy="32.5" r="25" fill="none" stroke="#d8bb58" stroke-width="1.2"/>
<g fill="#d2ad3c"><polygon points="32.50,-0.10 33.73,3.80 37.83,3.77 34.50,6.15 35.79,10.03 32.50,7.60 29.21,10.03 30.50,6.15 27.17,3.77 31.27,3.80"/><polygon points="44.98,2.38 44.62,6.46 48.42,7.99 44.43,8.92 44.14,13.00 42.03,9.50 38.06,10.48 40.74,7.39 38.57,3.92 42.34,5.51"/><polygon points="55.55,9.45 53.67,13.08 56.58,15.95 52.55,15.28 50.72,18.94 50.11,14.89 46.06,14.28 49.72,12.45 49.05,8.42 51.92,11.33"/><polygon points="62.62,20.02 59.49,22.66 61.08,26.43 57.61,24.26 54.52,26.94 55.50,22.97 52.00,20.86 56.08,20.57 57.01,16.58 58.54,20.38"/><polygon points="65.10,32.50 61.20,33.73 61.23,37.83 58.85,34.50 54.97,35.79 57.40,32.50 54.97,29.21 58.85,30.50 61.23,27.17 61.20,31.27"/><polygon points="62.62,44.98 58.54,44.62 57.01,48.42 56.08,44.43 52.00,44.14 55.50,42.03 54.52,38.06 57.61,40.74 61.08,38.57 59.49,42.34"/><polygon points="55.55,55.55 51.92,53.67 49.05,56.58 49.72,52.55 46.06,50.72 50.11,50.11 50.72,46.06 52.55,49.72 56.58,49.05 53.67,51.92"/><polygon points="44.98,62.62 42.34,59.49 38.57,61.08 40.74,57.61 38.06,54.52 42.03,55.50 44.14,52.00 44.43,56.08 48.42,57.01 44.62,58.54"/><polygon points="32.50,65.10 31.27,61.20 27.17,61.23 30.50,58.85 29.21,54.97 32.50,57.40 35.79,54.97 34.50,58.85 37.83,61.23 33.73,61.20"/><polygon points="20.02,62.62 20.38,58.54 16.58,57.01 20.57,56.08 20.86,52.00 22.97,55.50 26.94,54.52 24.26,57.61 26.43,61.08 22.66,59.49"/><polygon points="9.45,55.55 11.33,51.92 8.42,49.05 12.45,49.72 14.28,46.06 14.89,50.11 18.94,50.72 15.28,52.55 15.95,56.58 13.08,53.67"/><polygon points="2.38,44.98 5.51,42.34 3.92,38.57 7.39,40.74 10.48,38.06 9.50,42.03 13.00,44.14 8.92,44.43 7.99,48.42 6.46,44.62"/><polygon points="-0.10,32.50 3.80,31.27 3.77,27.17 6.15,30.50 10.03,29.21 7.60,32.50 10.03,35.79 6.15,34.50 3.77,37.83 3.80,33.73"/><polygon points="2.38,20.02 6.46,20.38 7.99,16.58 8.92,20.57 13.00,20.86 9.50,22.97 10.48,26.94 7.39,24.26 3.92,26.43 5.51,22.66"/><polygon points="9.45,9.45 13.08,11.33 15.95,8.42 15.28,12.45 18.94,14.28 14.89,14.89 14.28,18.94 12.45,15.28 8.42,15.95 11.33,13.08"/><polygon points="20.02,2.38 22.66,5.51 26.43,3.92 24.26,7.39 26.94,10.48 22.97,9.50 20.86,13.00 20.57,8.92 16.58,7.99 20.38,6.46"/></g>
<circle cx="32.5" cy="32.5" r="23.6" fill="#fff"/>
<circle cx="32.5" cy="32.5" r="22.2" fill="url(#globe)"/>
<path d="M17 22 Q24 15 31 19 Q30 27 23 28 Q19 27 17 22 Z M36 14 Q47 16 51 26 Q45 30 40 24 Q37 20 36 14 Z M29 35 Q37 39 36 52 Q30 48 27 41 Z M44 36 Q50 38 49 46 Q45 44 44 36 Z" fill="#8cc0ea" opacity="0.55"/>
<text x="32.5" y="40.5" text-anchor="middle" font-family="Liberation Serif" font-size="23" font-weight="bold" fill="#fff" letter-spacing="-0.4" stroke="#0b3a80" stroke-width="0.3">NSF</text>
</svg>
</body></html>
